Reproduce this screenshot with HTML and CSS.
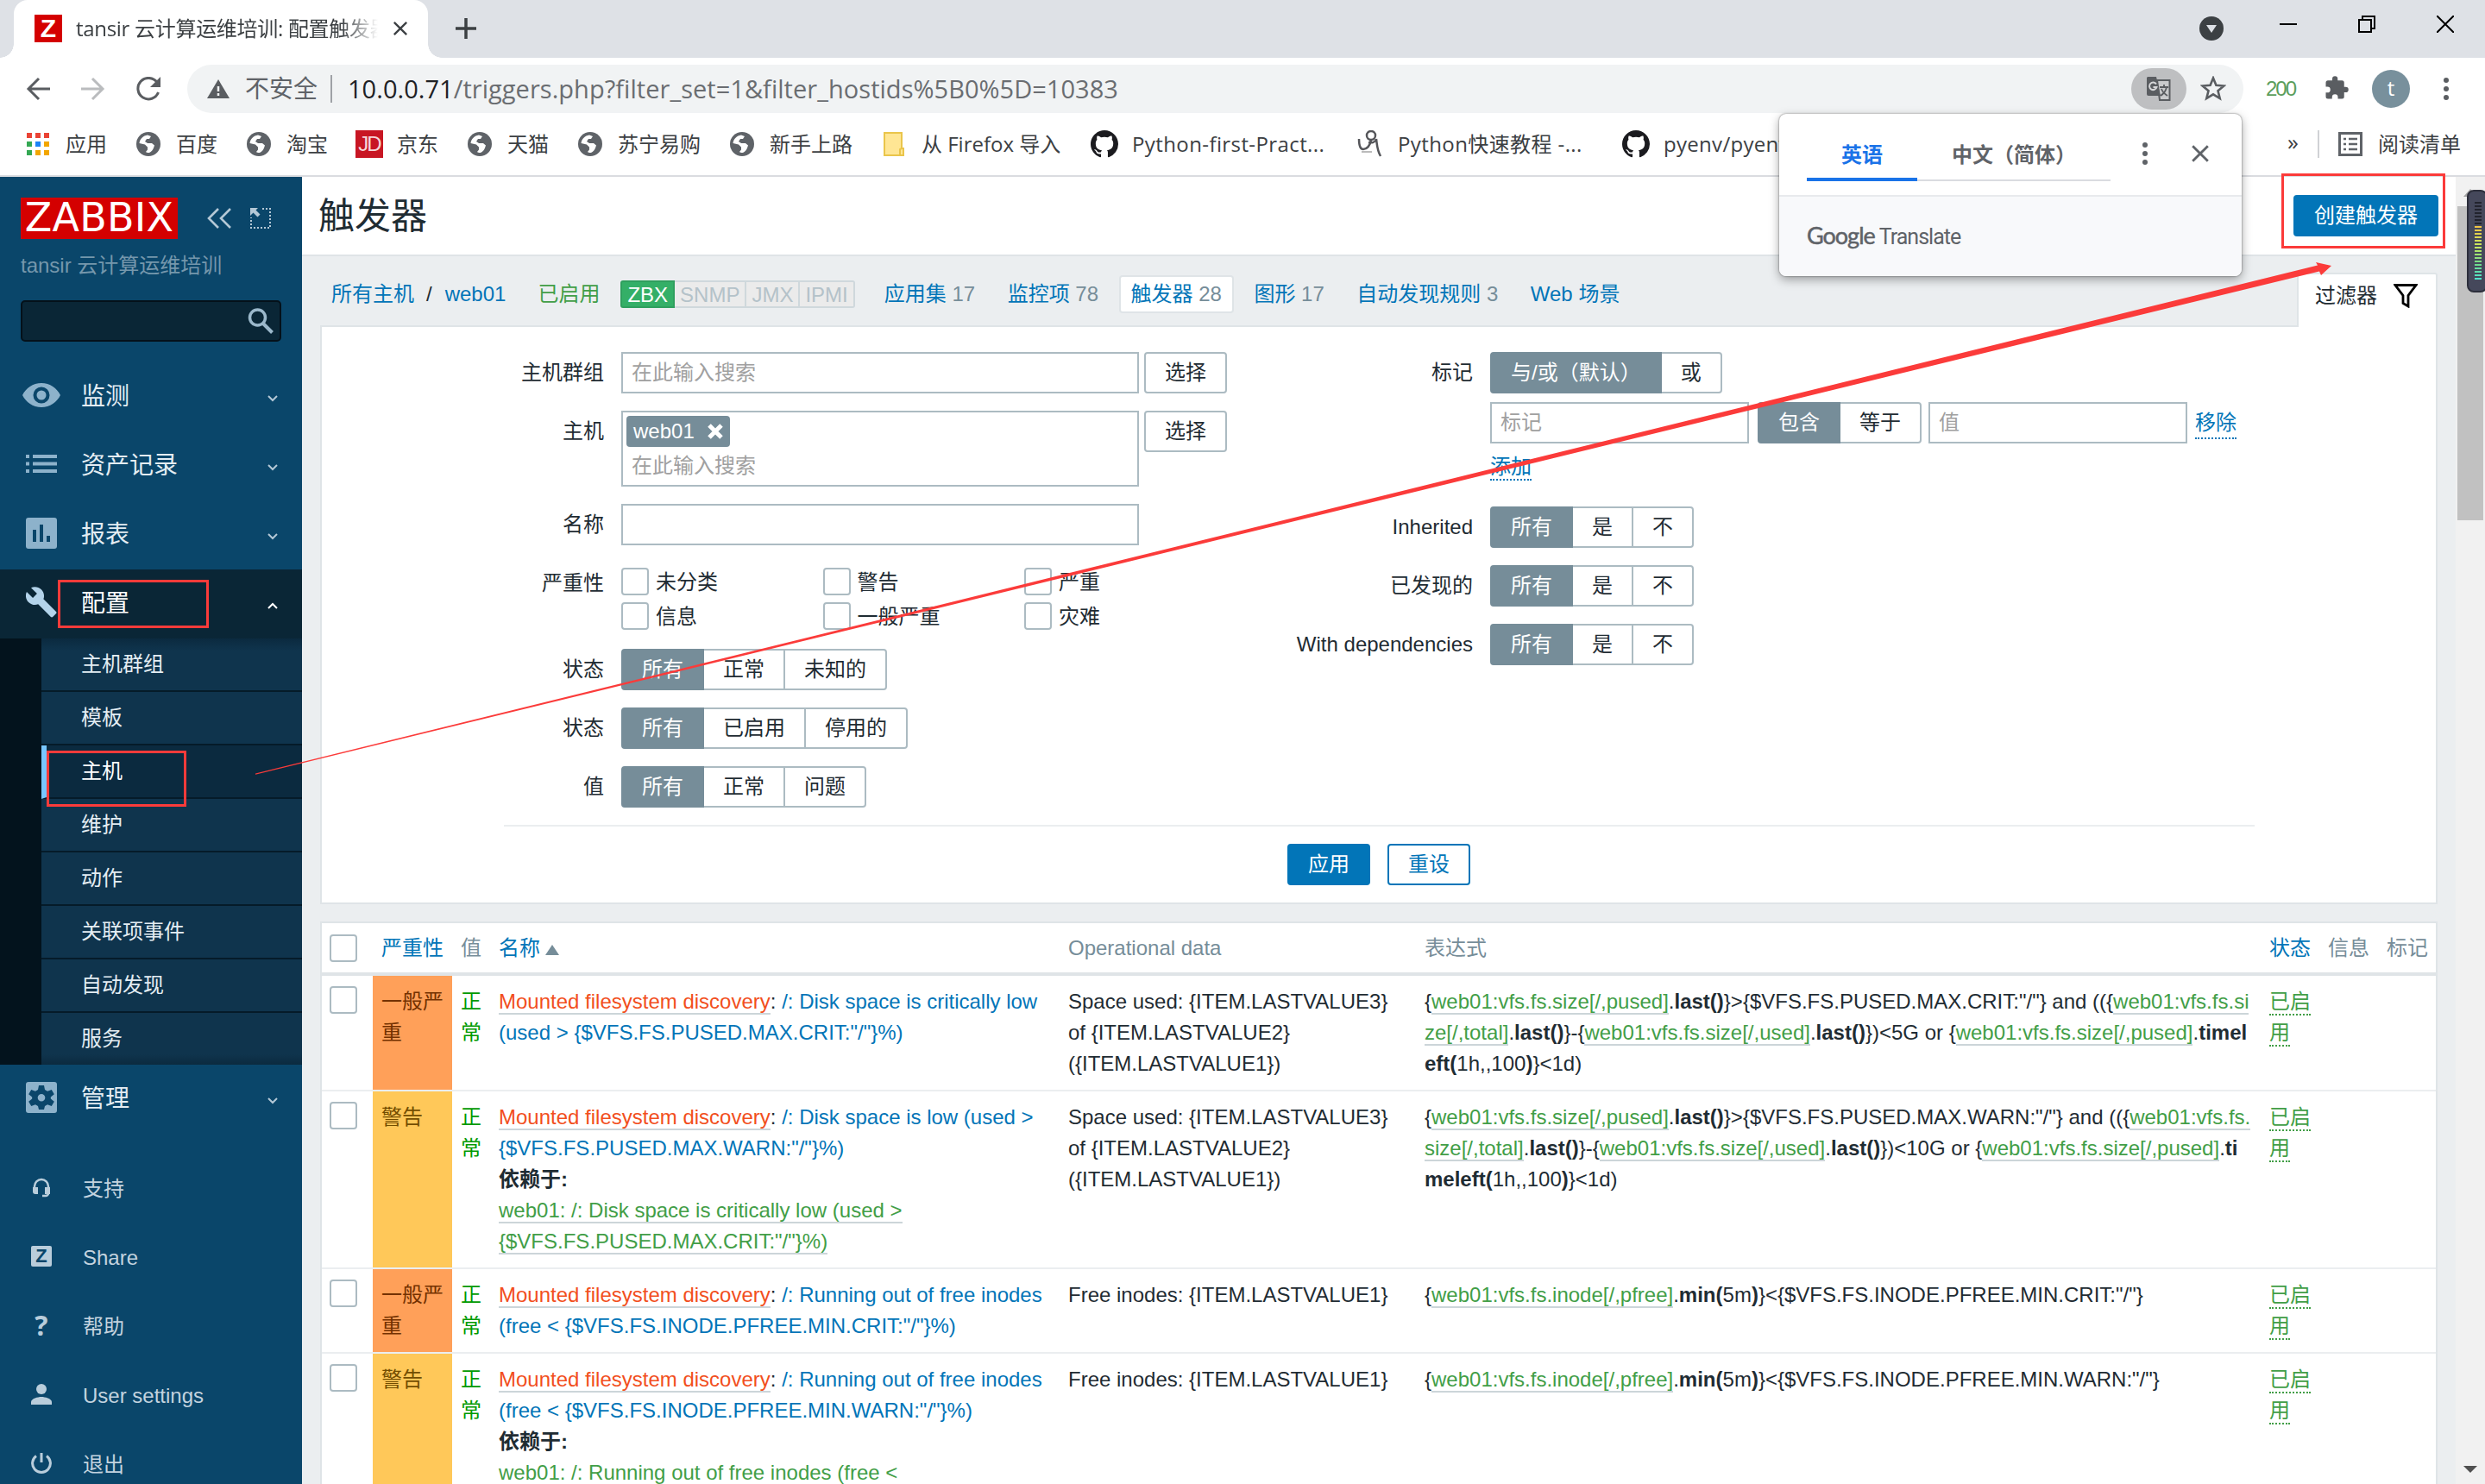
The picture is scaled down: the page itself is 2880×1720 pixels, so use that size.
FILE: index.html
```html
<!DOCTYPE html>
<html lang="zh-CN">
<head>
<meta charset="utf-8">
<title>tansir 云计算运维培训: 配置触发器</title>
<link rel="stylesheet" href="styles.css">
</head>
<body>
<svg class="defs" aria-hidden="true">
  <symbol id="globe" viewBox="0 0 28 28"><circle cx="14" cy="14" r="14" fill="#5f6368"/><path d="M13 3.500c-5 .8-9 4.500-9.500 9.500l6.500 1.500 3 3v3l-2 2.500c1 .8 2.500 1.300 4 1 2.500-1 4-3 5-5.500l1-3-3-2.500h-5l-3-2 2-3h3l2-3z" fill="#fff"/></symbol>
  <symbol id="github" viewBox="0 0 16 16"><path fill="#1b1b1f" d="M8 0C3.580 0 0 3.580 0 8c0 3.540 2.290 6.530 5.470 7.590.4.070.55-.17.55-.38 0-.19-.01-.82-.01-1.490-2.010.37-2.530-.49-2.690-.94-.09-.23-.48-.94-.82-1.130-.28-.15-.68-.52-.01-.53.63-.01 1.080.58 1.230.82.72 1.210 1.870.87 2.330.66.07-.52.28-.87.51-1.070-1.780-.2-3.640-.89-3.640-3.950 0-.87.31-1.590.82-2.150-.08-.2-.36-1.020.08-2.120 0 0 .67-.21 2.200.82A7.600 7.600 0 0 1 8 3.860c.68 0 1.360.09 2 .27 1.530-1.040 2.200-.82 2.200-.82.44 1.100.16 1.920.08 2.120.51.56.82 1.270.82 2.150 0 3.070-1.870 3.750-3.650 3.950.29.25.54.73.54 1.480 0 1.070-.01 1.930-.01 2.200 0 .21.15.46.55.38A8.010 8.010 0 0 0 16 8c0-4.420-3.580-8-8-8z"/></symbol>
  <symbol id="cross" viewBox="0 0 20 20"><path d="M2 2l16 16M18 2L2 18" fill="none" stroke="currentColor" stroke-width="2.600"/></symbol>
  <symbol id="kebab" viewBox="0 0 6 26"><g fill="currentColor"><circle cx="3" cy="3" r="3"/><circle cx="3" cy="13" r="3"/><circle cx="3" cy="23" r="3"/></g></symbol>
  <symbol id="chev" viewBox="0 0 12 8"><path d="M1 1l5 5 5-5" fill="none" stroke="currentColor" stroke-width="2"/></symbol>
</svg>

<header class="browser">
  <div class="tabstrip">
    <div class="tab">
      <span class="favicon">Z</span>
      <span class="tab-title">tansir 云计算运维培训: 配置触发器</span>
      <svg class="tab-close" width="18" height="18"><use href="#cross"/></svg>
    </div>
    <svg class="newtab" width="24" height="24" viewBox="0 0 24 24"><path d="M12 0v24M0 12h24" stroke="#3c4043" stroke-width="3.500"/></svg>
    <div class="wincontrols">
      <svg width="28" height="28" viewBox="0 0 28 28"><circle cx="14" cy="14" r="14" fill="#3c4043"/><path d="M8 10h12l-6 9z" fill="#dee1e6"/></svg>
      <svg width="20" height="20" viewBox="0 0 20 20"><path d="M0 10h20" stroke="#000" stroke-width="2"/></svg>
      <svg width="20" height="20" viewBox="0 0 20 20"><path d="M1 5h14v14H1zM5 5V1h14v14h-4" fill="none" stroke="#000" stroke-width="2"/></svg>
      <svg width="20" height="20" viewBox="0 0 20 20"><path d="M0 0l20 20M20 0L0 20" stroke="#000" stroke-width="2"/></svg>
    </div>
  </div>

  <div class="toolbar">
    <div class="navbtns">
      <svg width="28" height="28" viewBox="0 0 28 28"><path d="M28 14H3M15 2L3 14l12 12" fill="none" stroke="#5a5d61" stroke-width="3"/></svg>
      <svg width="28" height="28" viewBox="0 0 28 28"><path d="M0 14h25M13 2l12 12-12 12" fill="none" stroke="#babcbe" stroke-width="3"/></svg>
      <svg width="28" height="28" viewBox="0 0 28 28"><path d="M24 6.500A12.200 12.200 0 1 0 25.500 18" fill="none" stroke="#5a5d61" stroke-width="3"/><path d="M28 0v12H16z" fill="#5a5d61"/></svg>
    </div>
    <div class="omnibox">
      <svg class="warn" width="26" height="22" viewBox="0 0 26 22"><path d="M13 0l13 22H0z" fill="#5a5d61"/><path d="M13 8v6M13 16v3" stroke="#f1f3f4" stroke-width="2.500"/></svg>
      <span class="insecure">不安全</span>
      <span class="url"><b>10.0.0.71</b>/triggers.php?filter_set=1&amp;filter_hostids%5B0%5D=10383</span>
      <span class="translate-chip"><svg width="30" height="30" viewBox="0 0 30 30"><path d="M13 5h14.500v23H16z" fill="#c9cacc" stroke="#5a5d61" stroke-width="2"/><path d="M16 13h10M21 10v3M24 13c-1 5-4 8-7 10M18 15c1 3 4 6 7 8" stroke="#5a5d61" stroke-width="1.800" fill="none"/><path d="M2 1h10l5 22H3a2 2 0 0 1-2-2V2z" fill="#5a5d61"/><path d="M12 9.500A4.300 4.300 0 1 0 12.500 13H8.500" fill="none" stroke="#d5d6d8" stroke-width="2"/></svg></span>
      <svg class="star" width="30" height="30" viewBox="0 0 30 30"><path d="M15 2.500l3.400 8.300 9 .7-6.900 5.800 2.200 8.700L15 21.300 7.300 26l2.200-8.700-6.900-5.800 9-.7z" fill="none" stroke="#5a5d61" stroke-width="2.600"/></svg>
    </div>
    <span class="ext-count">200</span>
    <svg class="puzzle" width="30" height="30" viewBox="0 0 24 24"><path fill="#5a5d61" d="M20.500 11H19V7a2 2 0 0 0-2-2h-4V3.500a2.500 2.500 0 0 0-5 0V5H4a2 2 0 0 0-2 2v3.800h1.500a2.700 2.700 0 0 1 0 5.400H2V20a2 2 0 0 0 2 2h3.800v-1.500a2.700 2.700 0 0 1 5.400 0V22H17a2 2 0 0 0 2-2v-4h1.500a2.500 2.500 0 0 0 0-5z"/></svg>
    <span class="avatar">t</span>
    <svg class="menu-dots" width="6" height="26"><use href="#kebab"/></svg>
  </div>

  <nav class="bookmarks">
    <span class="bm"><i><svg width="26" height="26" viewBox="0 0 26 26"><path fill="#ea4335" d="M0 0h6v6H0zM10 0h6v6h-6zM20 0h6v6h-6z"/><path fill="#34a853" d="M0 10h6v6H0zM0 20h6v6H0z"/><path fill="#1a82f7" d="M10 10h6v6h-6z"/><path fill="#f2a600" d="M20 10h6v6h-6zM10 20h6v6h-6zM20 20h6v6h-6z"/></svg></i>应用</span>
    <span class="bm"><i><svg width="28" height="28"><use href="#globe"/></svg></i>百度</span>
    <span class="bm"><i><svg width="28" height="28"><use href="#globe"/></svg></i>淘宝</span>
    <span class="bm"><i class="jd">JD</i>京东</span>
    <span class="bm"><i><svg width="28" height="28"><use href="#globe"/></svg></i>天猫</span>
    <span class="bm"><i><svg width="28" height="28"><use href="#globe"/></svg></i>苏宁易购</span>
    <span class="bm"><i><svg width="28" height="28"><use href="#globe"/></svg></i>新手上路</span>
    <span class="bm"><i><svg width="24" height="28" viewBox="0 0 24 28"><path d="M1 1h20v18h2v8H1z" fill="#ffe694" stroke="#eac54b" stroke-width="2"/><path d="M19 27v-7l2-1" fill="none" stroke="#eac54b" stroke-width="2"/></svg></i><em class="w-firefox">从 Firefox 导入</em></span>
    <span class="bm"><i><svg width="32" height="32"><use href="#github"/></svg></i><em class="w-py1">Python-first-Pract...</em></span>
    <span class="bm"><i><svg width="30" height="32" viewBox="0 0 30 32"><g fill="none" stroke="#55565a" stroke-width="2.500"><circle cx="16" cy="6" r="5"/><path d="M2 10c0 7 1 12 5 12s8-4 9-11M13 14c4 1 8 0 9-4M22 10c1 7 1 13 5 20"/></g><path d="M5 25h12" stroke="#bbb" stroke-width="2"/></svg></i><em class="w-py2">Python快速教程 -...</em></span>
    <span class="bm"><i><svg width="32" height="32"><use href="#github"/></svg></i><em class="w-py3">pyenv/pyenv:</em></span>
    <span class="bm-more">»</span>
    <span class="reading"><svg width="28" height="28" viewBox="0 0 28 28"><path d="M1.500 1.500h25v25h-25z" fill="none" stroke="#5f6368" stroke-width="3"/><path d="M6 8h3M6 14h3M6 20h3M12 8h10M12 14h10M12 20h10" stroke="#5f6368" stroke-width="2.500"/></svg>阅读清单</span>
  </nav>
</header>

<div class="page">
  <aside class="sidebar">
    <div class="brand">
      <span class="logo">ZABBIX</span>
      <svg class="collapse" width="28" height="24" viewBox="0 0 28 24"><path d="M13 1L2 12l11 11M27 1L16 12l11 11" fill="none" stroke="#b4c8d6" stroke-width="2.600"/></svg>
      <svg class="kiosk" width="24" height="24" viewBox="0 0 24 24"><path d="M14 1h9v22H1V11" fill="none" stroke="#b4c8d6" stroke-width="2" stroke-dasharray="2 2"/><path d="M0 0h9L6.500 2.500l5 5-3 3-5-5L0 9z" fill="#b4c8d6"/></svg>
    </div>
    <div class="server">tansir 云计算运维培训</div>
    <div class="search"><svg width="30" height="30" viewBox="0 0 30 30"><circle cx="11.500" cy="11" r="9" fill="none" stroke="#9bb8cb" stroke-width="3.500"/><path d="M18 18l10.500 10.500" stroke="#9bb8cb" stroke-width="4"/></svg></div>

    <ul class="menu">
      <li><svg width="44" height="30" viewBox="0 0 44 30"><path fill="#8db2cb" fill-rule="evenodd" d="M22 1C12 1 4 7 0 15c4 8 12 14 22 14s18-6 22-14C40 7 32 1 22 1zm0 23.500a9.500 9.500 0 1 1 0-19 9.500 9.500 0 0 1 0 19zm0-4a5.500 5.500 0 1 0 0-11 5.500 5.500 0 0 0 0 11z"/></svg><span>监测</span><svg class="chev" width="12" height="8"><use href="#chev"/></svg></li>
      <li><svg width="36" height="22" viewBox="0 0 36 22"><path stroke="#8db2cb" stroke-width="4" d="M0 2h4M0 10.500h4M0 19h4M8 2h28M8 10.500h28M8 19h28"/></svg><span>资产记录</span><svg class="chev" width="12" height="8"><use href="#chev"/></svg></li>
      <li><svg width="36" height="36" viewBox="0 0 36 36"><rect width="36" height="36" rx="3" fill="#8db2cb"/><path stroke="#0a466a" stroke-width="4" d="M10 14v14M18 8v20M26 21v7"/></svg><span>报表</span><svg class="chev" width="12" height="8"><use href="#chev"/></svg></li>
      <li class="open"><svg width="36" height="36" viewBox="1 1 22.300 22.300"><path fill="#b3d3ea" d="M22.700 19l-9.100-9.100c.9-2.300.4-5-1.500-6.900-2-2-5-2.400-7.400-1.300L9 6 6 9 1.600 4.700C.4 7.100.9 10.100 2.900 12.100c1.900 1.900 4.600 2.400 6.900 1.500l9.100 9.100c.4.4 1 .4 1.400 0l2.300-2.300c.5-.4.5-1.100.1-1.400z"/></svg><span>配置</span><svg class="chev up" width="12" height="8"><use href="#chev"/></svg></li>
    </ul>
    <ul class="submenu">
      <li>主机群组</li><li>模板</li><li class="selected">主机</li><li>维护</li><li>动作</li><li>关联项事件</li><li>自动发现</li><li>服务</li>
    </ul>
    <ul class="menu">
      <li><svg width="36" height="36" viewBox="0 0 36 36"><rect width="36" height="36" rx="3" fill="#8db2cb"/><path fill="#0a466a" fill-rule="evenodd" d="M15 4h6l1 5 3 1.700 4.800-1.700 3 5.200-4 3.200v2.200l4 3.200-3 5.200-4.800-1.700-3 1.700-1 4h-6l-1-4-3-1.700-4.800 1.700-3-5.200 4-3.200v-2.200l-4-3.200 3-5.200L11 10.700 14 9zm3 10a4.300 4.300 0 1 0 0 8.600 4.300 4.300 0 0 0 0-8.600z"/></svg><span>管理</span><svg class="chev" width="12" height="8"><use href="#chev"/></svg></li>
    </ul>
    <ul class="usermenu">
      <li><svg width="24" height="24" viewBox="0 0 24 24"><path d="M4 14v-3a8 8 0 0 1 16 0v8a3 3 0 0 1-3 3h-4" fill="none" stroke="#b9cddb" stroke-width="2.500"/><path fill="#b9cddb" d="M2 12h6v8H5a3 3 0 0 1-3-3zM16 12h6v8h-6z"/></svg>支持</li>
      <li><span class="z">Z</span>Share</li>
      <li><span class="q">?</span>帮助</li>
      <li><svg width="24" height="24" viewBox="0 0 24 24"><circle cx="12" cy="6" r="6" fill="#b9cddb"/><path d="M0 24v-3c0-4 8-6 12-6s12 2 12 6v3z" fill="#b9cddb"/></svg>User settings</li>
      <li><svg width="24" height="24" viewBox="0 0 24 24"><path d="M12 0v11M6 3.500a10.400 10.400 0 1 0 12 0" fill="none" stroke="#b9cddb" stroke-width="3"/></svg>退出</li>
    </ul>
  </aside>

  <main class="content">
    <div class="titlebar"><h1>触发器</h1><button class="btn primary">创建触发器</button></div>

    <div class="hostnav">
      <a class="n-all">所有主机</a><span class="n-sep">/</span><a class="n-host">web01</a><span class="green n-state">已启用</span>
      <span class="avail"><b>ZBX</b><b>SNMP</b><b>JMX</b><b>IPMI</b></span>
      <span class="hl"><a>应用集</a> 17</span><span class="hl"><a>监控项</a> 78</span><span class="hl on"><a>触发器</a> 28</span><span class="hl"><a>图形</a> 17</span><span class="hl"><a>自动发现规则</a> 3</span><span class="hl"><a>Web 场景</a></span>
      <span class="filtertab">过滤器<svg width="28" height="28" viewBox="0 0 28 28"><path d="M2 1.500h24l-9 12V26l-6-3.500v-9z" fill="none" stroke="#000" stroke-width="2.800"/></svg></span>
    </div>

    <section class="filter">
      <div class="cols">
        <div class="form left">
          <label>主机群组</label><div class="ctl"><span class="input wide">在此输入搜索</span><button class="btn plain">选择</button></div>
          <label>主机</label><div class="ctl"><div class="input wide multi"><span class="chip">web01<svg width="18" height="18" viewBox="0 0 18 18"><path d="M2 2l14 14M16 2L2 16" stroke="#fff" stroke-width="5"/></svg></span><span class="ph">在此输入搜索</span></div><button class="btn plain">选择</button></div>
          <label>名称</label><div class="ctl"><span class="input wide"></span></div>
          <label>严重性</label><div class="sev"><span><i class="cb"></i>未分类</span><span><i class="cb"></i>警告</span><span><i class="cb"></i>严重</span><span><i class="cb"></i>信息</span><span><i class="cb"></i>一般严重</span><span><i class="cb"></i>灾难</span></div>
          <label>状态</label><div class="seg"><b>所有</b><b>正常</b><b>未知的</b></div>
          <label>状态</label><div class="seg"><b>所有</b><b>已启用</b><b>停用的</b></div>
          <label>值</label><div class="seg"><b>所有</b><b>正常</b><b>问题</b></div>
        </div>
        <div class="form right">
          <label>标记</label>
          <div class="tags">
            <div class="seg"><b>与/或（默认）</b><b>或</b></div>
            <div class="tagrow"><span class="input tag">标记</span><div class="seg"><b>包含</b><b>等于</b></div><span class="input tag">值</span><a class="dot">移除</a></div>
            <div class="addrow"><a class="dot">添加</a></div>
          </div>
          <label>Inherited</label><div class="seg"><b>所有</b><b>是</b><b>不</b></div>
          <label>已发现的</label><div class="seg"><b>所有</b><b>是</b><b>不</b></div>
          <label>With dependencies</label><div class="seg"><b>所有</b><b>是</b><b>不</b></div>
        </div>
      </div>
      <div class="actions"><button class="btn primary">应用</button><button class="btn outline">重设</button></div>
    </section>

    <table class="list">
      <colgroup><col class="c1"><col class="c2"><col class="c3"><col class="c4"><col class="c5"><col class="c6"><col class="c7"><col class="c8"><col class="c9"></colgroup>
      <thead><tr><th><i class="cb"></i></th><th><a>严重性</a></th><th>值</th><th><a>名称</a><i class="sort"></i></th><th>Operational data</th><th>表达式</th><th><a>状态</a></th><th>信息</th><th>标记</th></tr></thead>
      <tbody>
        <tr><td><i class="cb"></i></td><td class="avg">一般严<br>重</td><td class="ok">正<br>常</td>
          <td><a class="disc">Mounted filesystem discovery</a>: <a>/: Disk space is critically low<br>(used &gt; {$VFS.FS.PUSED.MAX.CRIT:"/"}%)</a></td>
          <td>Space used: {ITEM.LASTVALUE3}<br>of {ITEM.LASTVALUE2}<br>({ITEM.LASTVALUE1})</td>
          <td>{<u>web01:vfs.fs.size[/,pused]</u>.<b>last()</b>}&gt;{$VFS.FS.PUSED.MAX.CRIT:"/"} and (({<u>web01:vfs.fs.si</u><br><u>ze[/,total]</u>.<b>last()</b>}-{<u>web01:vfs.fs.size[/,used]</u>.<b>last()</b>})&lt;5G or {<u>web01:vfs.fs.size[/,pused]</u>.<b>timel<br>eft(</b>1h,,100<b>)</b>}&lt;1d)</td>
          <td><a class="dot en">已启<br>用</a></td><td></td><td></td></tr>
        <tr><td><i class="cb"></i></td><td class="warnsev">警告</td><td class="ok">正<br>常</td>
          <td><a class="disc">Mounted filesystem discovery</a>: <a>/: Disk space is low (used &gt;<br>{$VFS.FS.PUSED.MAX.WARN:"/"}%)</a><br><b>依赖于:</b><br><u>web01: /: Disk space is critically low (used &gt;<br>{$VFS.FS.PUSED.MAX.CRIT:"/"}%)</u></td>
          <td>Space used: {ITEM.LASTVALUE3}<br>of {ITEM.LASTVALUE2}<br>({ITEM.LASTVALUE1})</td>
          <td>{<u>web01:vfs.fs.size[/,pused]</u>.<b>last()</b>}&gt;{$VFS.FS.PUSED.MAX.WARN:"/"} and (({<u>web01:vfs.fs.</u><br><u>size[/,total]</u>.<b>last()</b>}-{<u>web01:vfs.fs.size[/,used]</u>.<b>last()</b>})&lt;10G or {<u>web01:vfs.fs.size[/,pused]</u>.<b>ti<br>meleft(</b>1h,,100<b>)</b>}&lt;1d)</td>
          <td><a class="dot en">已启<br>用</a></td><td></td><td></td></tr>
        <tr><td><i class="cb"></i></td><td class="avg">一般严<br>重</td><td class="ok">正<br>常</td>
          <td><a class="disc">Mounted filesystem discovery</a>: <a>/: Running out of free inodes<br>(free &lt; {$VFS.FS.INODE.PFREE.MIN.CRIT:"/"}%)</a></td>
          <td>Free inodes: {ITEM.LASTVALUE1}</td>
          <td>{<u>web01:vfs.fs.inode[/,pfree]</u>.<b>min(</b>5m<b>)</b>}&lt;{$VFS.FS.INODE.PFREE.MIN.CRIT:"/"}</td>
          <td><a class="dot en">已启<br>用</a></td><td></td><td></td></tr>
        <tr><td><i class="cb"></i></td><td class="warnsev">警告</td><td class="ok">正<br>常</td>
          <td><a class="disc">Mounted filesystem discovery</a>: <a>/: Running out of free inodes<br>(free &lt; {$VFS.FS.INODE.PFREE.MIN.WARN:"/"}%)</a><br><b>依赖于:</b><br><u>web01: /: Running out of free inodes (free &lt;</u></td>
          <td>Free inodes: {ITEM.LASTVALUE1}</td>
          <td>{<u>web01:vfs.fs.inode[/,pfree]</u>.<b>min(</b>5m<b>)</b>}&lt;{$VFS.FS.INODE.PFREE.MIN.WARN:"/"}</td>
          <td><a class="dot en">已启<br>用</a></td><td></td><td></td></tr>
      </tbody>
    </table>
  </main>

  <div class="scrollbar">
    <svg width="16" height="10" viewBox="0 0 16 10"><path d="M0 9h16L8 0z" fill="#a3a3a3"/></svg>
    <div class="thumb"></div>
    <svg class="down" width="16" height="9" viewBox="0 0 16 9"><path d="M0 0h16L8 8z" fill="#505050"/></svg>
  </div>
</div>

<div class="popup">
  <div class="pop-head">
    <div class="pop-tabs"><span class="cur">英语</span><span>中文（简体）</span></div>
    <svg class="pop-dots" width="6" height="26"><use href="#kebab"/></svg>
    <svg class="pop-close" width="22" height="22"><use href="#cross"/></svg>
  </div>
  <div class="pop-foot"><span class="goog">Google</span><span class="trans">Translate</span></div>
</div>

<div class="meter"><div class="bars"></div></div>
<div class="mark mark-config"></div>
<div class="mark mark-host"></div>
<div class="mark mark-create"></div>
<svg class="arrow" width="2880" height="1720" viewBox="0 0 2880 1720"><path fill="#fb3b3a" d="M296 896.600L2686 307.500 2684 304 2702 308 2690 319 2688 314.500 296 897.800z"/></svg>
</body>
</html>
```
FILE: styles.css
```css
* { box-sizing: border-box; }
body {
  margin: 0; width: 2880px; height: 1720px; overflow: hidden; position: relative;
  display: flex; flex-direction: column; background: #fff; color: #1f2c33;
  font: 24px/36px "Liberation Sans", "Noto Sans CJK SC", sans-serif;
}
ul { list-style: none; margin: 0; padding: 0; }
svg { display: block; flex: none; }
i, em { font-style: normal; }
a { color: #0275b8; }
.defs { position: absolute; width: 0; height: 0; }

/* Browser frame */
.browser { height: 205px; flex: none; border-bottom: 2px solid #dadce0; color: #3c4043; font-family: "Open Sans", "Noto Sans CJK SC", sans-serif; }
.tabstrip { height: 67px; background: #dee1e6; display: flex; align-items: center; padding-left: 16px; }
.tab { position: relative; width: 480px; height: 67px; background: #fff; border-radius: 16px 16px 0 0; display: flex; align-items: center; padding: 0 0 2px 24px; }
.tab::before, .tab::after { content: ""; position: absolute; bottom: 0; width: 16px; height: 16px; }
.tab::before { left: -16px; background: radial-gradient(circle at 0 0, #dee1e6 15.500px, #fff 16px); }
.tab::after { right: -16px; background: radial-gradient(circle at 100% 0, #dee1e6 15.500px, #fff 16px); }
.favicon { width: 32px; height: 32px; background: #d40000; color: #fff; font: bold 30px/32px "Liberation Sans", sans-serif; text-align: center; }
.tab-title { width: 350px; margin-left: 16px; letter-spacing: -0.3px; white-space: nowrap; overflow: hidden; -webkit-mask-image: linear-gradient(90deg, #000 88%, transparent); mask-image: linear-gradient(90deg, #000 88%, transparent); }
.tab-close { margin-left: 17px; color: #3c4043; }
.newtab { margin: -2px 0 0 32px; }
.wincontrols { margin-left: auto; align-self: flex-start; display: flex; align-items: center; gap: 71px; padding-right: 36px; height: 56px; }
.wincontrols svg:first-child { margin: 10px -6px 0 0; }

.toolbar { height: 72px; display: flex; align-items: center; }
.navbtns { display: flex; gap: 36px; width: 217px; padding-left: 30px; }
.omnibox { width: 2383px; height: 56px; border-radius: 28px; background: #f1f3f4; display: flex; align-items: center; padding-left: 23px; font-size: 28px; }
.insecure { margin-left: 18px; width: 84px; line-height: 38px; padding-bottom: 2px; color: #5f6368; white-space: nowrap; }
.url { margin-left: 15px; padding-left: 18px; border-left: 2px solid #9fa2a6; font-size: 29px; line-height: 32px; color: #6a6d71; white-space: nowrap; letter-spacing: 0.04px; }
.url b { font-weight: 400; color: #202124; }
.translate-chip { margin-left: auto; width: 64px; height: 48px; border-radius: 24px; background: #bebfc1; display: grid; place-items: center; }
.star { margin: 0 20px 0 16px; }
.ext-count { margin-left: 26px; width: 67px; color: #5c9e5c; font: 24px/36px "Liberation Sans", sans-serif; letter-spacing: -2px; }
.puzzle { margin-top: -3px; }
.avatar { margin-left: 26px; width: 44px; height: 44px; border-radius: 50%; background: #78909c; color: #fff; text-align: center; line-height: 42px; }
.menu-dots { margin-left: 39px; color: #5a5d61; }

.bookmarks { height: 64px; display: flex; align-items: center; gap: 32px; padding: 0 28px 8px; white-space: nowrap; }
.bm { display: flex; align-items: center; gap: 16px; }
.bm i { width: 32px; height: 32px; display: grid; place-items: center; flex: none; }
.bm .jd { background: #c81623; color: #f5d8da; font: 24px/32px "Liberation Sans", sans-serif; letter-spacing: -2px; }
.w-firefox { width: 164px; }
.w-py1 { width: 228px; letter-spacing: 0.4px; }
.w-py2 { width: 228px; letter-spacing: 0.4px; }
.w-py3 { letter-spacing: 0.3px; }
.bm-more { margin-left: auto; font-size: 26px; line-height: 30px; margin-top: -6px; }
.reading { display: flex; align-items: center; gap: 18px; padding-left: 22px; border-left: 2px solid #d0d2d5; height: 32px; margin-left: -10px; }

/* Layout */
.page { flex: 1; display: flex; min-height: 0; }
.sidebar { width: 350px; flex: none; background: #0a466a; overflow: hidden; display: flex; flex-direction: column; color: #e4edf3; }
.sidebar > * { flex: none; }
.content { flex: 1; min-width: 0; background: #ebeef0; overflow: hidden; }

/* Sidebar */
.brand { display: flex; align-items: center; padding: 24px 0 0 24px; }
.logo { width: 182px; height: 48px; background: #d40000; color: #fff; font: 46px/47px "DejaVu Sans", sans-serif; text-align: center; letter-spacing: 0.2px; }
.collapse { margin-left: 34px; }
.kiosk { margin-left: 22px; }
.server { margin: 12px 0 0 24px; line-height: 38px; color: #7597ac; white-space: nowrap; }
.search { margin: 21px 24px 24px; height: 48px; border: 2px solid #04111a; border-radius: 5px; background: #0a2636; display: flex; align-items: center; justify-content: flex-end; padding-right: 7px; }
.menu li { display: grid; grid-template-columns: 96px 214px 12px; align-items: center; height: 80px; font-size: 28px; }
.menu li > svg:first-child { margin: -4px auto 0; }
.menu li > span { margin-left: -2px; }
.chev { color: #b4c8d6; margin-top: 3px; }
.menu .up { transform: rotate(180deg); color: #fff; }
.menu .open { background: #0a2636; color: #fff; }
.submenu { padding-left: 48px; background: #03131d; }
.submenu li { height: 62px; border-bottom: 2px solid #051b29; background: #0f344d; line-height: 59px; padding-left: 46px; }
.submenu li:first-child { background: linear-gradient(#0b2a3f, #0f344d 14px); }
.submenu li:last-child { height: 60px; border-bottom: 0; background: linear-gradient(#0f344d 48px, #0b2a3f); }
.submenu .selected { background: #0b2a3f; border-left: 6px solid #78c6ff; padding-left: 40px; color: #fff; }
.usermenu { padding-top: 24px; color: #c3d3df; }
.usermenu li { height: 80px; display: flex; align-items: center; gap: 36px; padding-left: 36px; white-space: nowrap; }
.usermenu svg { margin-top: -4px; }
.z { width: 24px; height: 24px; margin-top: -4px; border-radius: 2px; background: #b9cddb; color: #0a466a; font: bold 22px/24px "Liberation Sans", sans-serif; text-align: center; }
.q { width: 24px; margin-top: -4px; text-align: center; font: bold 32px/36px "Open Sans", sans-serif; color: #b9cddb; }

/* Buttons and controls */
.btn { height: 48px; border-radius: 4px; padding: 0 22px; border: 2px solid #0275b8; font: inherit; line-height: 44px; white-space: nowrap; }
.primary { background: #0275b8; color: #fff; }
.outline { background: #fff; color: #0275b8; }
.plain { background: #fff; border-color: #acbbc2; color: #1f2c33; }
.cb { display: block; width: 32px; height: 32px; border: 2px solid #acbbc2; border-radius: 4px; background: #fff; flex: none; }
.input { display: block; height: 48px; border: 2px solid #acbbc2; background: #fff; padding: 0 10px; line-height: 43px; color: #a0a0a0; white-space: nowrap; }
.wide { width: 600px; }
.tag { width: 300px; }
.multi { height: 88px; padding: 4px; }
.chip { display: flex; width: 120px; height: 36px; border-radius: 4px; background: #768d99; color: #fff; align-items: center; justify-content: space-between; padding: 0 8px; line-height: 34px; }
.ph { display: block; padding-left: 6px; line-height: 40px; margin-top: 2px; }
.seg { display: flex; height: 48px; }
.seg b { font-weight: 400; border: 2px solid #acbbc2; padding: 0 22px; line-height: 43px; margin-left: -2px; background: #fff; white-space: nowrap; }
.seg b:first-child { margin-left: 0; background: #768d99; border-color: #768d99; color: #fff; border-radius: 4px 0 0 4px; position: relative; }
.seg b:last-child { border-radius: 0 4px 4px 0; }
.dot { border-bottom: 2px dotted #0275b8; line-height: 28px; padding-bottom: 1px; }
.en { color: #429e47; border-color: #429e47; }
.green { color: #429e47; }

/* Page header */
.titlebar { height: 92px; background: #fff; border-bottom: 2px solid #dfe4e7; display: flex; align-items: center; justify-content: space-between; padding: 0 20px 0 19px; }
h1 { margin: 2px 0 0; font-size: 42px; line-height: 60px; font-weight: 400; }
.hostnav { height: 80px; display: flex; align-items: center; padding: 8px 21px 0 34px; white-space: nowrap; color: #768d99; }
.hostnav > * { flex: none; }
.n-sep { margin: 0 15px 0 14px; color: #1f2c33; }
.n-state { margin: 0 24px 0 37px; }
.avail { display: flex; margin-right: 20px; }
.avail b { height: 32px; border: 2px solid #cfd8dc; border-left-width: 0; background: #ebebeb; color: #b4c2c9; font-weight: 400; line-height: 30px; padding: 0 6px; }
.avail b:first-child { background: #34af67; border: 2px solid #2f9f5e; color: #fff; border-radius: 3px 0 0 3px; }
.avail b:last-child { border-radius: 0 3px 3px 0; }
.hl { padding: 0 12px; height: 44px; line-height: 40px; border: 2px solid transparent; margin-right: 9.500px; }
.hl.on { background: #fff; border-color: #dfe4e7; border-radius: 4px; }
.filtertab { position: relative; margin-left: auto; align-self: flex-end; width: 163px; height: 63px; margin-bottom: -2px; background: #fff; border: 2px solid #dfe4e7; border-bottom: 0; border-radius: 3px 3px 0 0; display: flex; align-items: center; gap: 19px; padding: 0 0 11px 19px; color: #1f2c33; }

/* Filter */
.filter { margin: 0 21px; height: 671px; background: #fff; border: 2px solid #dfe4e7; }
.cols { height: 579px; display: flex; padding-top: 29px; border-bottom: 2px solid #ebeef0; margin: 0 210px 0 211px; }
.form { display: grid; grid-template-columns: 116px 1fr; column-gap: 20px; row-gap: 20px; align-content: start; }
.form label { text-align: right; line-height: 47px; white-space: nowrap; }
.left { width: 871px; }
.right { grid-template-columns: 252px 1fr; flex: 1; }
.ctl { display: flex; gap: 6px; align-items: flex-start; }
.sev { display: grid; grid-template-columns: 233.500px 233.500px 150px; row-gap: 8px; padding: 6px 0 2px; }
.sev span { display: flex; gap: 8px; height: 32px; line-height: 34px; }
.tags { height: 159px; }
.tagrow { display: flex; margin-top: 10px; }
.tagrow .seg { margin: 0 8px 0 10px; }
.tagrow .dot { margin: 10px 0 0 9px; height: 33px; }
.addrow { padding-top: 9px; }
.actions { display: flex; justify-content: center; gap: 20px; padding-top: 20px; }

/* Trigger list */
.list { margin: 20px 0 0 21px; width: 2454px; table-layout: fixed; border-collapse: separate; border-spacing: 0; border: 2px solid #dfe4e7; background: #fff; }
.c1 { width: 59px; } .c2 { width: 92px; } .c3 { width: 44px; } .c4 { width: 660px; } .c5 { width: 413px; } .c6 { width: 979px; } .c7 { width: 68px; } .c8 { width: 68px; } .c9 { width: 67px; }
.list th { height: 61px; padding: 0 10px; text-align: left; font-weight: 400; color: #768d99; border-bottom: 4px solid #dfe4e7; white-space: nowrap; }
.list td { padding: 12px 0 12px 10px; vertical-align: top; border-bottom: 2px solid #ebeef0; white-space: nowrap; }
.list .cb { margin-left: -1px; }
.list .avg { background: #ffa059; color: #733100; background-clip: padding-box; }
.list .warnsev { background: #ffc859; color: #734d00; background-clip: padding-box; }
.list .ok { color: #009900; }
.list u { text-decoration: none; color: #429e47; border-bottom: 2px solid #ccd5d9; }
.disc { color: #f24f1d; border-bottom: 2px solid #ccd5d9; }
.sort { display: inline-block; margin-left: 6px; border: 8px solid transparent; border-top: 0; border-bottom: 12px solid #768d99; }

/* Scrollbar */
.scrollbar { width: 34px; flex: none; background: #f1f1f1; display: flex; flex-direction: column; align-items: center; padding: 14px 0 12px; }
.thumb { width: 30px; height: 364px; margin-top: 10px; background: #c1c1c1; }
.down { margin-top: auto; }

/* Translate bubble */
.popup { position: absolute; left: 2062px; top: 132px; width: 536px; height: 188px; border-radius: 8px; background: #fff; box-shadow: 0 0 2px rgba(0,0,0,.6), 0 4px 12px rgba(0,0,0,.35); overflow: hidden; }
.pop-head { height: 96px; border-bottom: 2px solid #e8eaed; display: flex; padding-left: 32px; }
.pop-tabs { display: flex; width: 352px; height: 78px; border-bottom: 2px solid #dadce0; font-weight: 700; color: #5f6368; line-height: 95px; white-space: nowrap; }
.pop-tabs span { width: 224px; padding-left: 40px; }
.pop-tabs .cur { width: 128px; padding: 0; text-align: center; color: #1a73e8; height: 78px; border-bottom: 4px solid #1a73e8; }
.pop-dots { margin: 33px 0 0 37px; color: #5f6368; }
.pop-close { margin: 35px 0 0 50px; color: #5f6368; }
.pop-foot { height: 92px; background: #f8f9fb; padding: 0 32px; color: #5f6368; display: flex; align-items: baseline; gap: 5px; }
.goog { font: 27px/90px "Lato", sans-serif; letter-spacing: -1px; -webkit-text-stroke: .5px #5f6368; }
.trans { font: 25px/90px "Roboto", sans-serif; letter-spacing: -1px; }

/* Level meter docked to the screen edge */
.meter { position: absolute; left: 2859px; top: 220px; width: 24px; height: 119px; background: #45485b; border: 2px solid #2c2e3b; border-radius: 8px; padding: 12px 0 0 7px; }
.bars { width: 8px; height: 90px; background: repeating-linear-gradient(transparent 0 2px, #45485b 2px 4px), linear-gradient(#22242e 0 28px, #f2c343 28px, #c5e860 52px, #6fdc8c 72px, #4fe3cf); }

/* Annotations */
.mark { position: absolute; border: 3px solid #fb3b3a; }
.mark-config { left: 67px; top: 672px; width: 175px; height: 56px; }
.mark-host { left: 54px; top: 870px; width: 162px; height: 65px; }
.mark-create { left: 2644px; top: 201px; width: 190px; height: 87px; }
.arrow { position: absolute; left: 0; top: 0; }
```
